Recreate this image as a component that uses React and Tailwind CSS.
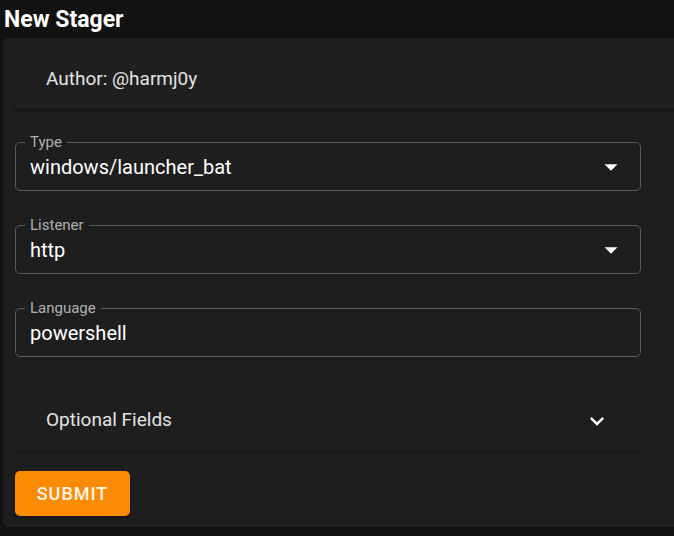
import React from "react";

function Arrow() {
  return (
    <svg width="26" height="26" viewBox="0 0 24 24" className="absolute right-[16px] top-1/2 -translate-y-1/2">
      <path d="M6 9.5l6 6 6-6z" fill="#ffffff" />
    </svg>
  );
}

function Field({ label, value, select }) {
  return (
    <div className="relative h-[49px] border border-[#5c5c5c] rounded-[5px] flex items-center pl-[14px]">
      <span className="absolute -top-[10px] left-[9px] px-[5px] bg-[#1e1e1e] text-[15px] leading-[18px] text-[#b0b0b0]">
        {label}
      </span>
      <span className="text-[20px] text-white leading-none">{value}</span>
      {select && <Arrow />}
    </div>
  );
}

export default function App() {
  return (
    <div className="w-[674px] h-[536px] bg-[#121212] overflow-hidden font-['Roboto',sans-serif]">
      <h1 className="h-[38px] pl-[4px] pt-[6px] text-[23px] font-bold text-white leading-[27px]">
        New Stager
      </h1>
      <div className="ml-[3px] w-[720px] h-[489px] bg-[#1e1e1e] rounded-[5px] pt-[12px] pl-[12px]">
        <div className="h-[60px] bg-[#1f1f1f] border-b-2 border-[#181818] shadow-[0_1px_2px_rgba(0,0,0,0.4)] flex items-center pl-[31px] text-[19px] text-[#e4e4e4]">
          Author: @harmj0y
        </div>
        <div className="w-[626px] mt-[32px] flex flex-col gap-[34px]">
          <Field label="Type" value="windows/launcher_bat" select />
          <Field label="Listener" value="http" select />
          <Field label="Language" value="powershell" />
          <div className="h-[61px] border-b border-[#161616] flex items-center justify-between pl-[31px] pr-[30px]">
            <span className="text-[19px] text-[#e4e4e4] pb-[1px]">Optional Fields</span>
            <svg width="28" height="28" viewBox="0 0 24 24">
              <path d="M16.59 8.59 12 13.17 7.41 8.59 6 10l6 6 6-6z" fill="#ffffff" />
            </svg>
          </div>
        </div>
        <button className="mt-[19px] w-[115px] h-[45px] bg-[#fb8a05] rounded-[5px] text-[18px] font-medium tracking-[1px] text-[#fff6ea] shadow-[0_2px_3px_rgba(0,0,0,0.3)]">
          SUBMIT
        </button>
      </div>
    </div>
  );
}
